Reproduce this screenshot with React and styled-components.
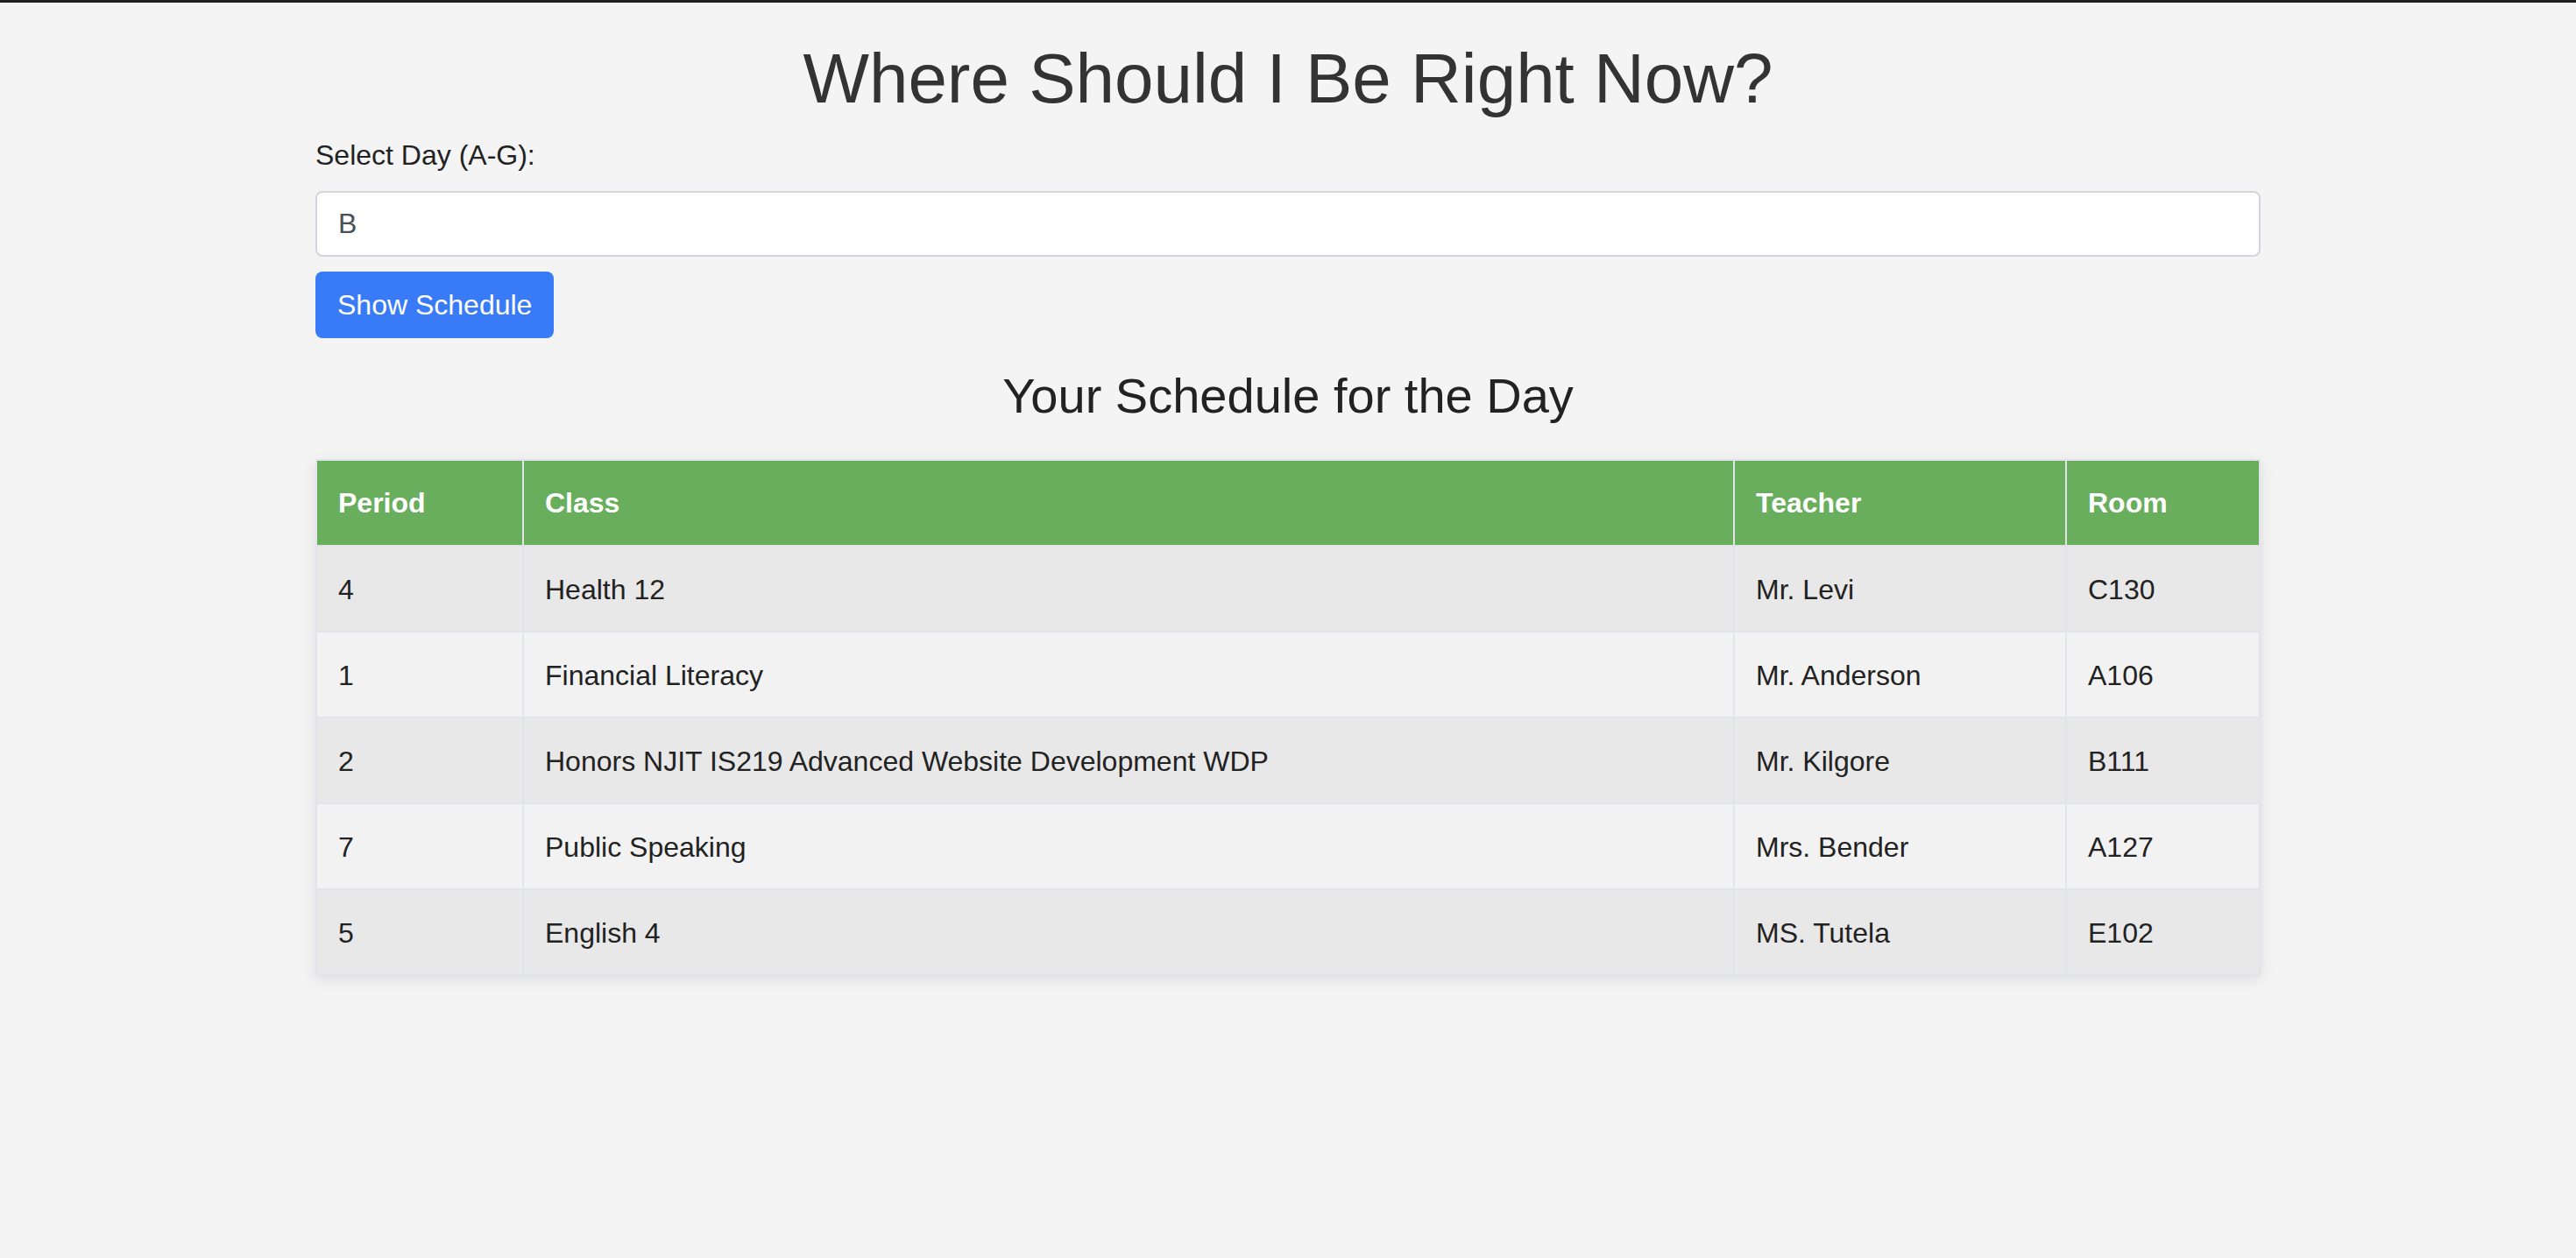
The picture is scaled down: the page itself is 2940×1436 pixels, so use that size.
import React, { useState } from "react";
import styled, { createGlobalStyle } from "styled-components";

const GlobalStyle = createGlobalStyle`
  html, body {
    margin: 0;
    padding: 0;
    background: #f4f4f4;
    font-family: "Liberation Sans", Arial, Helvetica, sans-serif;
    color: #222;
  }
  body {
    border-top: 3px solid #1f1f1f;
    min-height: 1433px;
  }
`;

const Page = styled.div`
  max-width: 2220px;
  margin: 0 auto;
  display: flex;
  flex-direction: column;
`;

const Title = styled.h1`
  margin: 41px 0 23px;
  font-size: 80px;
  line-height: 92px;
  font-weight: 400;
  color: #333;
  text-align: center;
`;

const Label = styled.label`
  display: block;
  font-size: 32px;
  line-height: 37px;
  color: #222;
  margin-bottom: 22px;
`;

const DayInput = styled.input`
  box-sizing: border-box;
  width: 100%;
  height: 75px;
  padding: 0 24px;
  border: 2px solid #d2d6db;
  border-radius: 8px;
  background: #fff;
  font-family: inherit;
  font-size: 32px;
  color: #495057;
  outline: none;
  margin: 0 0 17px;
`;

const Button = styled.button`
  align-self: flex-start;
  height: 76px;
  padding: 0 25px;
  border: none;
  border-radius: 8px;
  background: #397bf6;
  color: #fff;
  font-family: inherit;
  font-size: 32px;
  cursor: pointer;
`;

const SubTitle = styled.h2`
  margin: 34px 0 40px;
  font-size: 56px;
  line-height: 64px;
  font-weight: 400;
  color: #222;
  text-align: center;
`;

const Table = styled.table`
  width: 100%;
  table-layout: fixed;
  border-collapse: collapse;
  box-shadow: 0 4px 16px rgba(0, 0, 0, 0.1);
`;

const HeadCell = styled.th`
  background: #69ae5d;
  color: #fff;
  font-weight: 700;
  font-size: 32px;
  line-height: 48px;
  text-align: left;
  padding: 24px 24px;
  border: 2px solid #e1e4e8;
`;

const Row = styled.tr`
  background: ${(p) => (p.$odd ? "#e8e8e8" : "#f2f2f2")};
`;

const Cell = styled.td`
  font-size: 32px;
  line-height: 48px;
  color: #222;
  padding: 25px 24px 23px;
  border: 2px solid #e1e4e8;
  white-space: nowrap;
`;

const schedules = {
  B: [
    { period: "4", name: "Health 12", teacher: "Mr. Levi", room: "C130" },
    { period: "1", name: "Financial Literacy", teacher: "Mr. Anderson", room: "A106" },
    { period: "2", name: "Honors NJIT IS219 Advanced Website Development WDP", teacher: "Mr. Kilgore", room: "B111" },
    { period: "7", name: "Public Speaking", teacher: "Mrs. Bender", room: "A127" },
    { period: "5", name: "English 4", teacher: "MS. Tutela", room: "E102" },
  ],
};

const App = () => {
  const [day, setDay] = useState("B");
  const [shown, setShown] = useState("B");
  const rows = schedules[shown.toUpperCase()] || [];

  return (
    <>
      <GlobalStyle />
      <Page>
        <Title>Where Should I Be Right Now?</Title>
        <Label htmlFor="day">Select Day (A-G):</Label>
        <DayInput id="day" value={day} onChange={(e) => setDay(e.target.value)} />
        <Button onClick={() => setShown(day)}>Show Schedule</Button>
        <SubTitle>Your Schedule for the Day</SubTitle>
        <Table>
          <colgroup>
            <col style={{ width: "236px" }} />
            <col style={{ width: "1382px" }} />
            <col style={{ width: "379px" }} />
            <col style={{ width: "221px" }} />
          </colgroup>
          <thead>
            <tr>
              <HeadCell>Period</HeadCell>
              <HeadCell>Class</HeadCell>
              <HeadCell>Teacher</HeadCell>
              <HeadCell>Room</HeadCell>
            </tr>
          </thead>
          <tbody>
            {rows.map((r, i) => (
              <Row key={r.period} $odd={i % 2 === 0}>
                <Cell>{r.period}</Cell>
                <Cell>{r.name}</Cell>
                <Cell>{r.teacher}</Cell>
                <Cell>{r.room}</Cell>
              </Row>
            ))}
          </tbody>
        </Table>
      </Page>
    </>
  );
};

export default App;
